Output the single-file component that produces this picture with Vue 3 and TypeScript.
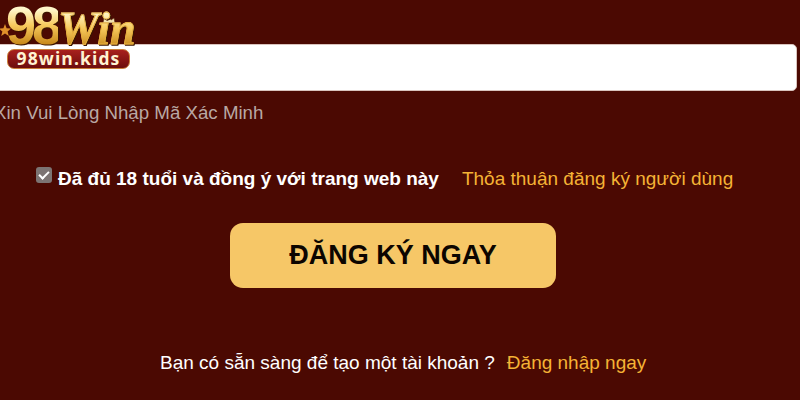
<script setup lang="ts">
import { ref } from 'vue'
const agreed = ref<boolean>(true)
const code = ref<string>('')
</script>

<template>
  <div class="page">
    <input v-model="code" class="field" type="text" />
    <p class="hint">Xin Vui Lòng Nhập Mã Xác Minh</p>
    <div class="terms">
      <label class="agree">
        <input v-model="agreed" type="checkbox" class="check" />
        <span>Đã đủ 18 tuổi và đồng ý với trang web này</span>
      </label>
      <a class="link">Thỏa thuận đăng ký người dùng</a>
    </div>
    <button class="submit" type="button">ĐĂNG KÝ NGAY</button>
    <div class="signin">
      <span>Bạn có sẵn sàng để tạo một tài khoản ?</span>
      <a class="link">Đăng nhập ngay</a>
    </div>
    <div class="logo">
      <svg class="star" viewBox="0 0 12 12" width="12" height="12">
        <path d="M6 0l1.6 4.2L12 4.6 8.6 7.4 9.8 12 6 9.5 2.2 12l1.2-4.6L0 4.6l4.4-.4z" fill="#e0902a" />
      </svg>
      <svg class="crown" viewBox="0 0 14 10" width="14" height="10">
        <path d="M1 9l1-5 3 2 2-5 2 5 3-2 1 5z" fill="#f4e3b0" stroke="#5a2a10" stroke-width=".6" />
      </svg>
      <div class="brand"><span class="nums">98</span><span class="word">Win</span></div>
      <div class="pill">98win.kids</div>
    </div>
  </div>
</template>

<style>
html, body { margin: 0; background: #4b0902; overflow: hidden; }
</style>

<style scoped>
.page {
  position: relative;
  width: 800px;
  height: 400px;
  overflow: hidden;
  background: #4b0902;
  font-family: "Liberation Sans", Arial, sans-serif;
  color: #fff;
}
.field {
  display: block;
  box-sizing: border-box;
  width: 808px;
  height: 47px;
  margin: 44px 0 0 -11px;
  border: 1px solid #d9c3bd;
  border-radius: 5px;
  background: #fff;
  outline: none;
}
.hint {
  margin: 11px 0 0 -6px;
  font-size: 18.7px;
  line-height: 22px;
  color: #b9a8a4;
}
.terms {
  display: flex;
  align-items: center;
  margin: 43px 0 0 36px;
  font-size: 19px;
  line-height: 24px;
}
.agree {
  display: flex;
  align-items: center;
  gap: 6px;
  font-weight: 700;
}
.check {
  appearance: none;
  position: relative;
  width: 16px;
  height: 16px;
  margin: -8px 0 0;
  border-radius: 3px;
  background: #7c7473;
}
.check:checked::after {
  content: "";
  position: absolute;
  left: 5px;
  top: 2px;
  width: 4px;
  height: 8px;
  border: solid #fff;
  border-width: 0 2px 2px 0;
  transform: rotate(45deg);
}
.link {
  color: #f5b335;
  font-size: 19px;
}
.terms .link { margin-left: 23px; }
.submit {
  display: block;
  width: 326px;
  height: 65px;
  margin: 32px 0 0 230px;
  border: 0;
  border-radius: 13px;
  background: #f6c767;
  color: #0c0500;
  font-family: inherit;
  font-size: 27px;
  font-weight: 700;
}
.signin {
  display: flex;
  gap: 12px;
  margin: 63px 0 0 160px;
  font-size: 19px;
  line-height: 24px;
}
.logo {
  position: absolute;
  left: 0;
  top: 0;
  width: 140px;
}
.star { position: absolute; left: -1px; top: 24px; }
.crown { position: absolute; left: 102px; top: 14px; }
.brand {
  display: flex;
  align-items: baseline;
  box-sizing: border-box;
  height: 48px;
  padding: 3px 0 0 6px;
  white-space: nowrap;
  filter: drop-shadow(1px 1px 0 #3a1500);
}
.nums, .word {
  background: linear-gradient(180deg, #fff6c9 15%, #f7c95c 50%, #c98a1c 90%);
  -webkit-background-clip: text;
  background-clip: text;
  color: transparent;
}
.nums {
  font-size: 54px;
  font-weight: 700;
  line-height: 45px;
  letter-spacing: -4px;
}
.word {
  font-family: "Liberation Serif", serif;
  font-size: 46px;
  font-style: italic;
  font-weight: 700;
  line-height: 45px;
  padding-right: 3px;
  -webkit-text-stroke: 0.8px #e8b040;
}
.pill {
  box-sizing: border-box;
  width: 123px;
  height: 20px;
  margin: 1px 0 0 7px;
  border: 1px solid #c9803a;
  border-radius: 7px;
  background: linear-gradient(180deg, #a8201d, #6d0d0c);
  color: #fff3d2;
  font-family: "Open Sans", sans-serif;
  font-size: 17.5px;
  font-weight: 700;
  line-height: 17px;
  letter-spacing: 1.1px;
  text-align: center;
}
</style>
